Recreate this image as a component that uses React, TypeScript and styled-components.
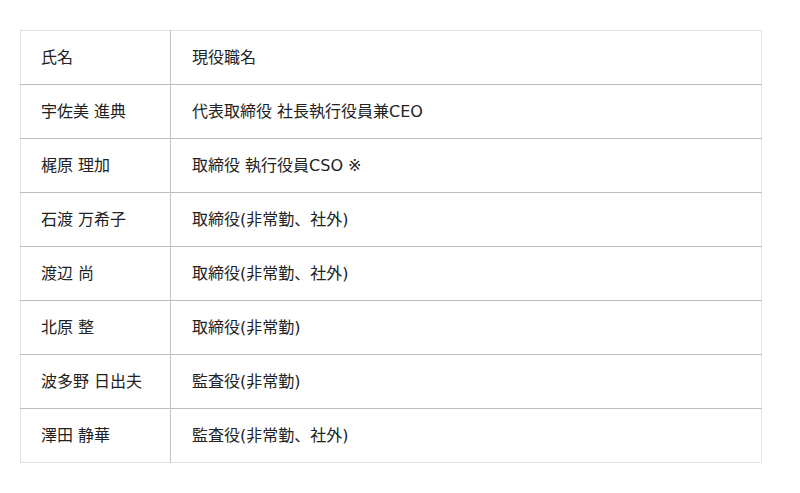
import React from "react";
import styled, { createGlobalStyle } from "styled-components";

const GlobalStyle = createGlobalStyle`
  body {
    margin: 0;
    background: #ffffff;
    font-family: "DejaVu Sans", "Noto Sans CJK JP", sans-serif;
    color: #222222;
  }
`;

const _Page = styled.div`
  padding: 30px 38px 30px 20px;
`;

const _Table = styled.table`
  width: 100%;
  border-collapse: collapse;
  border: 1px solid #e2e2e2;
  font-size: 16px;
`;

const _Row = styled.tr`
  height: 54px;
  & + & > td {
    border-top: 1px solid #bdbdbd;
  }
`;

const _Cell = styled.td<{ $name?: boolean }>`
  padding: 0 0 0 ${(p) => (p.$name ? "20px" : "21px")};
  vertical-align: middle;
  width: ${(p) => (p.$name ? "129px" : "auto")};
  border-right: ${(p) => (p.$name ? "1px solid #c4c4c4" : "none")};
  line-height: 20px;
  white-space: nowrap;
`;

const rows: [string, string][] = [
  ["氏名", "現役職名"],
  ["宇佐美 進典", "代表取締役 社長執行役員兼CEO"],
  ["梶原 理加", "取締役 執行役員CSO ※"],
  ["石渡 万希子", "取締役(非常勤、社外)"],
  ["渡辺 尚", "取締役(非常勤、社外)"],
  ["北原 整", "取締役(非常勤)"],
  ["波多野 日出夫", "監査役(非常勤)"],
  ["澤田 静華", "監査役(非常勤、社外)"],
];

export default function App() {
  return (
    <>
      <GlobalStyle />
      <_Page>
        <_Table>
          <tbody>
            {rows.map(([name, title], i) => (
              <_Row key={i}>
                <_Cell $name>{name}</_Cell>
                <_Cell>{title}</_Cell>
              </_Row>
            ))}
          </tbody>
        </_Table>
      </_Page>
    </>
  );
}
